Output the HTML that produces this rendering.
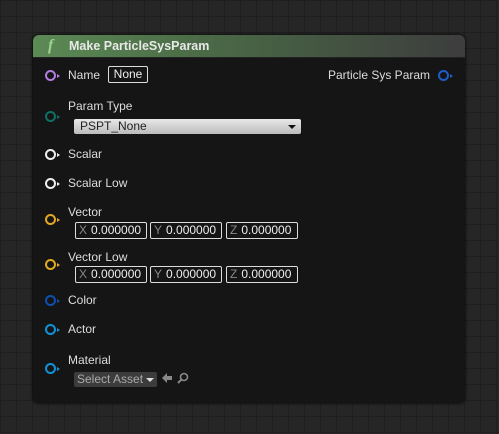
<!DOCTYPE html><html><head><style>
body{margin:0;width:499px;height:434px;background:#262626;background-image:linear-gradient(#1f1f1f 1px,transparent 1px),linear-gradient(90deg,#1f1f1f 1px,transparent 1px);background-size:16px 16px;font-family:"Liberation Sans",sans-serif;position:relative;overflow:hidden;color:#ddd;font-size:12px}
.node{position:absolute;left:33px;top:35px;width:432px;height:368px;background:#151515;border-radius:6px;box-shadow:0 0 3px #000}
.hdr{position:absolute;left:0;top:0;width:432px;height:22px;border-radius:6px 6px 0 0;background:linear-gradient(90deg,#5c8a55 0%,#4a6a46 40%,#3d3d3d 100%);border-bottom:1px solid #222}
.t{position:absolute;white-space:nowrap}
.pin{position:absolute;width:7px;height:7px;border-radius:50%;border:2px solid}
.pin:after{content:"";position:absolute;left:10px;top:2px;border-left:3px solid;border-left-color:inherit;border-top:2px solid transparent;border-bottom:2px solid transparent}
.box{position:absolute;border:1px solid #ddd;border-radius:2px;height:15px;line-height:15px;font-size:12px;color:#eee}
.box i{font-style:normal;color:#888;margin:0 4px 0 3px}
</style></head><body>
<div class="node">
<div class="hdr"></div>
<div class="t" style="left:15px;top:2px;font:italic bold 16px 'Liberation Serif',serif;color:#9fd28f">f</div>
<div class="t" style="left:36px;top:4px;font-weight:bold;color:#e8e8e8;font-size:12.5px">Make ParticleSysParam</div>

<div class="pin" style="left:12px;top:35px;border-color:#b07ee0"></div>
<div class="t" style="left:35px;top:33px">Name</div>
<div class="box" style="left:75px;top:31px;width:38px;text-align:center">None</div>
<div class="t" style="left:295px;top:33px">Particle Sys Param</div>
<div class="pin" style="left:405px;top:35px;border-color:#1e5cc8"></div>

<div class="pin" style="left:12px;top:76px;border-color:#0d7066"></div>
<div class="t" style="left:35px;top:64px">Param Type</div>
<div class="t" style="left:41px;top:84px;width:227px;height:15px;background:linear-gradient(#e8e8e8,#bbb);border-radius:2px;color:#222;line-height:15px;padding-left:6px;box-sizing:border-box">PSPT_None<span style="position:absolute;right:5px;top:6px;border-top:4px solid #111;border-left:4px solid transparent;border-right:4px solid transparent"></span></div>

<div class="pin" style="left:12px;top:114px;border-color:#eee"></div>
<div class="t" style="left:35px;top:112px">Scalar</div>
<div class="pin" style="left:12px;top:143px;border-color:#eee"></div>
<div class="t" style="left:35px;top:141px">Scalar Low</div>

<div class="pin" style="left:12px;top:179px;border-color:#e0a91f"></div>
<div class="t" style="left:35px;top:170px">Vector</div>
<div class="box" style="left:42px;top:187px;width:70px"><i>X</i>0.000000</div>
<div class="box" style="left:117px;top:187px;width:70px"><i>Y</i>0.000000</div>
<div class="box" style="left:193px;top:187px;width:70px"><i>Z</i>0.000000</div>

<div class="pin" style="left:12px;top:224px;border-color:#e0a91f"></div>
<div class="t" style="left:35px;top:215px">Vector Low</div>
<div class="box" style="left:42px;top:231px;width:70px"><i>X</i>0.000000</div>
<div class="box" style="left:117px;top:231px;width:70px"><i>Y</i>0.000000</div>
<div class="box" style="left:193px;top:231px;width:70px"><i>Z</i>0.000000</div>

<div class="pin" style="left:12px;top:260px;border-color:#0d4fb0"></div>
<div class="t" style="left:35px;top:258px">Color</div>
<div class="pin" style="left:12px;top:289px;border-color:#0e93d8"></div>
<div class="t" style="left:35px;top:287px">Actor</div>
<div class="pin" style="left:12px;top:328px;border-color:#0e93d8"></div>
<div class="t" style="left:35px;top:318px">Material</div>
<div class="t" style="left:41px;top:337px;width:83px;height:15px;background:#3c3c3c;border-radius:2px;color:#aaa;line-height:15px;padding-left:3px;box-sizing:border-box">Select Asset<span style="position:absolute;right:3px;top:6px;border-top:4px solid #ddd;border-left:4px solid transparent;border-right:4px solid transparent"></span></div>
<svg style="position:absolute;left:128px;top:337px" width="30" height="14"><path d="M1 6 L6 1 L6 4 L11 4 L11 8 L6 8 L6 11 Z" fill="#888"/><circle cx="23" cy="5" r="3.5" fill="none" stroke="#888" stroke-width="1.6"/><path d="M20.5 7.5 L17 11" stroke="#888" stroke-width="2"/></svg>
</div>
</body></html>
